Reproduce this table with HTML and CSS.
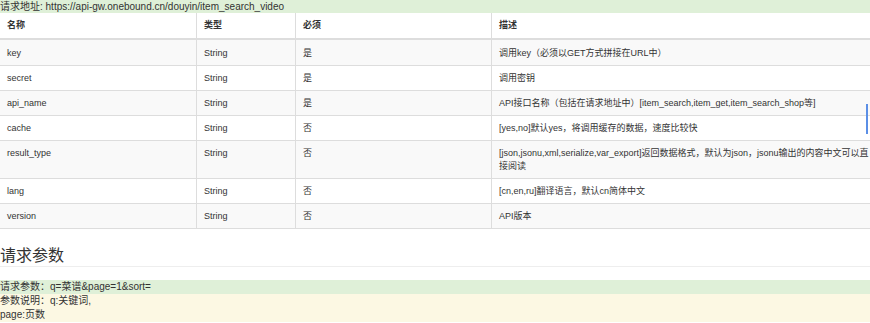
FILE: index.html
```html
<!DOCTYPE html>
<html lang="zh-CN">
<head>
  <meta charset="UTF-8" />
  <title>item_search_video</title>
  <link rel="stylesheet" href="styles.css">
</head>
<body>

<div class="page">
  <div class="alert-success url-bar">请求地址: https://api-gw.onebound.cn/douyin/item_search_video</div>

  <table class="params">
    <thead>
      <tr>
        <th class="c-name">名称</th>
        <th class="c-type">类型</th>
        <th class="c-req">必须</th>
        <th>描述</th>
      </tr>
    </thead>
    <tbody>
      <tr>
        <td>key</td><td>String</td><td>是</td>
        <td>调用key（必须以GET方式拼接在URL中）</td>
      </tr>
      <tr>
        <td>secret</td><td>String</td><td>是</td>
        <td>调用密钥</td>
      </tr>
      <tr>
        <td>api_name</td><td>String</td><td>是</td>
        <td>API接口名称（包括在请求地址中）[item_search,item_get,item_search_shop等]</td>
      </tr>
      <tr>
        <td>cache</td><td>String</td><td>否</td>
        <td>[yes,no]默认yes，将调用缓存的数据，速度比较快</td>
      </tr>
      <tr>
        <td>result_type</td><td>String</td><td>否</td>
        <td>[json,jsonu,xml,serialize,var_export]返回数据格式，默认为json，jsonu输出的内容中文可以直接阅读</td>
      </tr>
      <tr>
        <td>lang</td><td>String</td><td>否</td>
        <td>[cn,en,ru]翻译语言，默认cn简体中文</td>
      </tr>
      <tr>
        <td>version</td><td>String</td><td>否</td>
        <td>API版本</td>
      </tr>
    </tbody>
  </table>

  <h3 class="section-title">请求参数</h3>

  <div class="alert-success line">请求参数：q=菜谱&amp;page=1&amp;sort=</div>
  <div class="alert-warning">
    <div class="line">参数说明：q:关键词,</div>
    <div class="line">page:页数</div>
  </div>
</div>

<div class="side-mark"></div>

</body>
</html>
```

FILE: styles.css
```css
html, body {
  overflow: hidden;
}

body {
  margin: 0;
  font-family: 'Liberation Sans', Arial, 'Noto Sans CJK SC', sans-serif;
  color: #333;
  background: #fff;
}

.page {
  width: 877px;
}

.alert-success {
  background: #dff0d8;
}

.alert-warning {
  background: #fcf8e3;
}

.url-bar {
  font-size: 10px;
  line-height: 13px;
  height: 13px;
  white-space: nowrap;
}

.params {
  width: 877px;
  border-collapse: collapse;
  font-size: 9px;
  line-height: 13px;
  table-layout: fixed;
}

.params th, .params td {
  text-align: left;
  vertical-align: top;
  padding: 6px 7px 5px;
  border-left: 1px solid #ddd;
  border-top: 1px solid #ddd;
}

.params th:first-child, .params td:first-child {
  border-left: none;
}

.params th {
  font-weight: bold;
  padding-bottom: 6px;
  border-top: none;
  border-bottom: 2px solid #ddd;
}

.params thead + tbody tr:first-child td {
  border-top: none;
  padding-top: 7px;
}

.params tbody tr:nth-child(odd) td {
  background: #f9f9f9;
}

.params tbody tr:last-child td {
  border-bottom: 1px solid #ddd;
}

/* column widths exclude the 7px side padding */
.c-name { width: 182px; }
.c-type { width: 84px; }
.c-req { width: 181px; }

.section-title {
  margin: 18px 0 0;
  font-size: 16px;
  font-weight: normal;
  line-height: 18px;
  padding-bottom: 1px;
  border-bottom: 1px solid #eee;
}

.line {
  font-size: 10px;
  line-height: 14px;
}

.section-title + .alert-success {
  margin-top: 13px;
}

.side-mark {
  position: absolute;
  left: 866px;
  top: 104px;
  width: 2px;
  height: 30px;
  background: #5b8fe6;
}
```
